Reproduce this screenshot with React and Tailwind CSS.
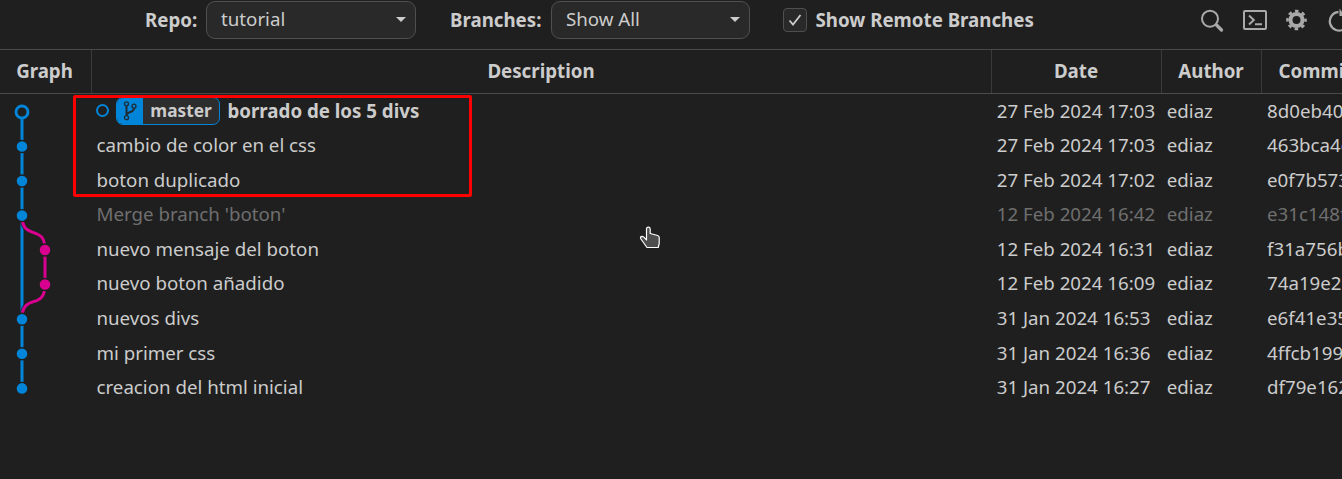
import React from "react";

const commits = [
  { text: "borrado de los 5 divs", date: "27 Feb 2024 17:03", hash: "8d0eb40", head: true },
  { text: "cambio de color en el css", date: "27 Feb 2024 17:03", hash: "463bca4e" },
  { text: "boton duplicado", date: "27 Feb 2024 17:02", hash: "e0f7b573" },
  { text: "Merge branch 'boton'", date: "12 Feb 2024 16:42", hash: "e31c148f", muted: true },
  { text: "nuevo mensaje del boton", date: "12 Feb 2024 16:31", hash: "f31a756b" },
  { text: "nuevo boton añadido", date: "12 Feb 2024 16:09", hash: "74a19e2" },
  { text: "nuevos divs", date: "31 Jan 2024 16:53", hash: "e6f41e35" },
  { text: "mi primer css", date: "31 Jan 2024 16:36", hash: "4ffcb199" },
  { text: "creacion del html inicial", date: "31 Jan 2024 16:27", hash: "df79e162" },
];

const BLUE = "#0085d9";
const PINK = "#d9008f";
const BG = "#1f1f1f";
const PITCH = 34.56;
const rowY = (i) => 17.6 + i * PITCH;

function Dropdown({ value, className }) {
  return (
    <div className={`flex h-[38px] items-center justify-between rounded-[9px] border border-[#4f4f4f] bg-[#292929] pl-[14px] pr-[9px] ${className}`}>
      <span className="pb-[2px]">{value}</span>
      <svg className="-mt-px" width="10" height="5" viewBox="0 0 10 5"><path d="M0 0h10L5 5z" fill="#cccccc" /></svg>
    </div>
  );
}

function Toolbar() {
  return (
    <div className="flex h-[49px] shrink-0 items-start pl-[145px] pt-px">
      <span className="mr-[9px] flex h-[38px] w-[52px] items-center font-bold">Repo:</span>
      <Dropdown value="tutorial" className="w-[210px]" />
      <span className="ml-[34px] mr-[8px] flex h-[38px] w-[93px] items-center font-bold">Branches:</span>
      <Dropdown value="Show All" className="w-[199px]" />
      <div className="ml-[33px] mt-[7px] flex size-6 items-center justify-center rounded-[4px] border border-[#4f4f4f] bg-[#292929]">
        <svg width="14" height="14" viewBox="0 0 14 14" fill="none"><path d="M1.500 7.500l3.500 4L12.500 2" stroke="#cccccc" strokeWidth="1.800" /></svg>
      </div>
      <span className="ml-[8.500px] flex h-[38px] w-[220px] items-center font-bold">Show Remote Branches</span>
      <svg className="ml-[163.500px] mt-[7px] shrink-0" width="143" height="26" viewBox="1199 8 143 26" fill="none">
        <circle cx="1210" cy="18.700" r="8" stroke="#a9a9a9" strokeWidth="2" />
        <path d="M1216.500 25l5 5" stroke="#a9a9a9" strokeWidth="3.300" strokeLinecap="round" />
        <rect x="1244" y="11" width="22" height="18" rx="1" stroke="#a9a9a9" strokeWidth="2" />
        <path d="M1249 15.500l4.800 4.500-4.800 4.500M1255 24.300h7" stroke="#a9a9a9" strokeWidth="2" />
        <circle cx="1296.500" cy="20" r="6" stroke="#a9a9a9" strokeWidth="4" />
        <circle cx="1296.500" cy="20" r="9" stroke="#a9a9a9" strokeWidth="2.600" strokeDasharray="3.534 3.534" strokeDashoffset="1.767" />
        <path d="M1344 29.200A9.300 9.300 0 1 1 1338.500 12" stroke="#a9a9a9" strokeWidth="2.300" />
        <path d="M1339.500 8.500v7.500h6z" fill="#a9a9a9" />
      </svg>
    </div>
  );
}

function Graph() {
  const dots = [1, 2, 3, 6, 7, 8];
  const branch = `M22 ${rowY(3)}C22 ${rowY(3) + 27} 45 ${rowY(4) - 27} 45 ${rowY(4)}V${rowY(5)}C45 ${rowY(5) + 27} 22 ${rowY(6) - 27} 22 ${rowY(6)}`;
  return (
    <svg className="shrink-0" width="91" height="385" viewBox="0 0 91 385" fill="none">
      <path d={`M22 ${rowY(0)}V${rowY(8)}`} stroke={BLUE} strokeWidth="3" />
      <path d={branch} stroke={BG} strokeWidth="5" strokeOpacity="0.75" />
      <path d={branch} stroke={PINK} strokeWidth="3" />
      <circle cx="22" cy={rowY(0) + 0.4} r="6" fill={BG} stroke={BLUE} strokeWidth="2.900" />
      {dots.map((i) => <circle key={i} cx="22" cy={rowY(i) + 0.3} r="6" fill={BLUE} stroke={BG} strokeWidth="1.400" />)}
      {[4, 5].map((i) => <circle key={i} cx="45" cy={rowY(i) + 0.1} r="6" fill={PINK} stroke={BG} strokeWidth="1.400" />)}
    </svg>
  );
}

function BranchLabel() {
  return (
    <>
      <span className="mb-[2px] mr-[7px] size-[13px] shrink-0 rounded-full border-2 border-[#0085d9]" />
      <span className="mr-[7.500px] flex h-[28px] w-[104px] shrink-0 overflow-hidden rounded-[7px] border border-[#0085d9] bg-[#2d2d2d]">
        <span className="flex w-[26px] items-center justify-center bg-[#0085d9] pb-px">
          <svg width="15" height="20" viewBox="0 0 15 20" fill="none" stroke="#202b33" strokeWidth="1.300">
            <circle cx="3.500" cy="2.800" r="2" />
            <circle cx="11" cy="5.200" r="2" />
            <circle cx="3.500" cy="16.700" r="2" />
            <path d="M3.500 4.800v10M11 7.200c0 5-6.800 2.500-7.500 7" strokeWidth="2" />
          </svg>
        </span>
        <span className="flex flex-1 items-center justify-center text-[17.280px] font-bold">master</span>
      </span>
    </>
  );
}

export default function App() {
  const head = "flex items-center justify-center border-l border-[#3a3a3a]";
  return (
    <div className="relative flex h-[479px] w-[1342px] flex-col overflow-hidden bg-[#1f1f1f] font-['Noto_Sans',sans-serif] text-[18.72px] leading-none whitespace-nowrap text-[#cccccc]">
      <Toolbar />
      <div className="grid h-[45px] shrink-0 grid-cols-[91px_900px_170px_100px_108px] border-y border-[#4a4a4a] font-bold">
        <div className="flex items-center justify-center pr-[2px]">Graph</div>
        <div className={`${head} pr-px`}>Description</div>
        <div className={`${head} pr-px`}>Date</div>
        <div className={`${head} pr-px`}>Author</div>
        <div className={head}>Commit</div>
      </div>
      <div className="flex">
        <Graph />
        <div className="flex flex-col">
          {commits.map((c) => (
            <div key={c.hash} className={`grid h-[34.56px] grid-cols-[900px_170px_100px_130px] items-center pb-[0.44px] ${c.muted ? "text-[#6f6f6f]" : ""}`}>
              <div className={`flex items-center ${c.head ? "pl-[5px] font-bold" : "pl-[5.500px]"}`}>
                {c.head && <BranchLabel />}
                <span>{c.text}</span>
              </div>
              <span className="pl-[5.760px]">{c.date}</span>
              <span className="pl-[5.760px]">ediaz</span>
              <span className="pl-[6px]">{c.hash}</span>
            </div>
          ))}
        </div>
      </div>
      <div className="absolute left-[73px] top-[95px] h-[102px] w-[399px] rounded-[2px] border-3 border-[#ff0000]" />
      <svg className="absolute left-[639px] top-[226px]" width="22" height="24" viewBox="0 0 22 24">
        <path d="M7.500 14V3q0-1.800 1.800-1.800T11.200 3v4.500l7.500 2q1.500.5 1.500 2v6l-1 4H8L1.600 12.500q-.5-2 1.500-2.200 1.500 0 4.400 3.700z" fill="#4d4d4d" stroke="#ffffff" strokeWidth="1.200" strokeLinejoin="round" />
      </svg>
    </div>
  );
}
